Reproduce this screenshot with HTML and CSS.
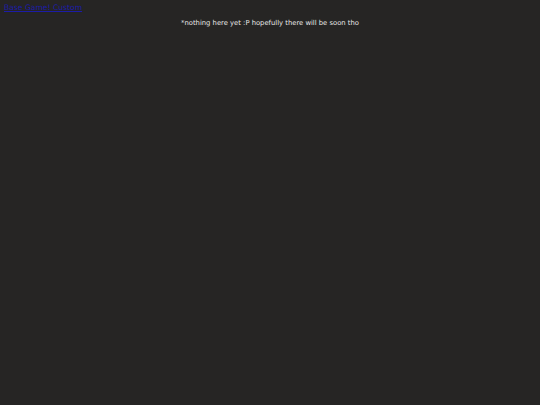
FILE: index.html
```html
<!DOCTYPE html>
<html>
<head>
<meta charset="utf-8">
<link rel="stylesheet" href="styles.css">
</head>
<body>
<nav class="nav"><a class="nav-link" href="#">Base Game! Custom</a></nav>
<p class="msg">*nothing here yet :P hopefully there will be soon tho</p>
</body>
</html>
```
FILE: styles.css
```css
html, body {
  margin: 0;
  padding: 0;
  background: #262524;
  height: 100%;
}
body {
  font-family: "DejaVu Sans", Verdana, sans-serif;
  font-size: 6.8px;
  color: #e8e8e8;
}
.nav {
  padding: 3px 0 0 4px;
  height: 10px;
}
.nav-link {
  font-family: "DejaVu Sans", Verdana, sans-serif;
  font-size: 7.6px;
  color: #1c1ca8;
}
.msg {
  margin: 6px 0 0;
  text-align: center;
}
```
